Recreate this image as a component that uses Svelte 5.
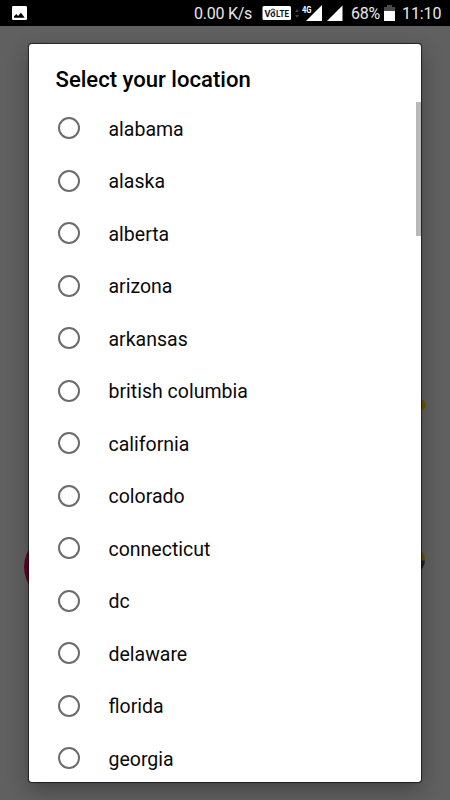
<script lang="ts">
  const locations = [
    'alabama',
    'alaska',
    'alberta',
    'arizona',
    'arkansas',
    'british columbia',
    'california',
    'colorado',
    'connecticut',
    'dc',
    'delaware',
    'florida',
    'georgia'
  ];

  let selected = $state('');
</script>

<div class="screen">
  <header class="status-bar">
    <svg class="picture" width="15" height="14" viewBox="0 0 15 14" aria-hidden="true">
      <rect width="15" height="14" rx="1.3" fill="#fff" />
      <path d="M2 11.7V10.6L4.3 8L6 10L9 6.7L12.7 11.7Z" fill="#000" />
    </svg>
    <span class="speed">0.00 K/s</span>
    <svg class="volte" width="30" height="15" viewBox="0 0 30 15" aria-hidden="true">
      <rect x="0.5" y="0" width="28.5" height="14" rx="1.5" fill="#fff" />
      <text x="2.5" y="11" textLength="11" lengthAdjust="spacingAndGlyphs">Vo</text>
      <text x="14" y="11" textLength="13" lengthAdjust="spacingAndGlyphs">LTE</text>
      <path d="M8.5 4.3Q11 1.7 13.4 4.3M10.5 5.8Q11.8 4.5 13 6.3" fill="none" stroke="#111" stroke-width="0.9" />
    </svg>
    <svg class="arrows" width="4" height="9" viewBox="0 0 4 9" aria-hidden="true">
      <path d="M0 3L2 0L4 3ZM0 6L2 9L4 6Z" fill="#444" />
    </svg>
    <svg class="signal" width="21" height="18" viewBox="0 0 21 18" aria-hidden="true">
      <path d="M4 17L20 1V17Z" fill="#fff" />
      <path d="M0 0H11V8L9 10H0Z" fill="#000" />
      <text class="network" x="0" y="8.5" textLength="9.5" lengthAdjust="spacingAndGlyphs">4G</text>
    </svg>
    <svg class="signal-two" width="16" height="16" viewBox="0 0 16 16" aria-hidden="true">
      <path d="M0 16L15.5 0.5V16Z" fill="#fff" />
    </svg>
    <span class="percent">68%</span>
    <svg class="battery" width="11" height="16" viewBox="0 0 11 16" aria-hidden="true">
      <path d="M0 6V2H3V0H8V2H11V6Z" fill="#4a4a4a" />
      <path d="M0 6H11V16H0Z" fill="#fff" />
    </svg>
    <span class="clock">11:10</span>
  </header>

  <main class="backdrop">
    <span class="blob pink"></span>
    <span class="blob gold"></span>
    <span class="blob brown"></span>

    <div class="dialog" role="dialog" aria-labelledby="title">
      <h1 id="title">Select your location</h1>
      <div class="list" role="radiogroup" aria-labelledby="title">
        {#each locations as location}
          <label class="option">
            <input type="radio" name="location" value={location} bind:group={selected} />
            <span>{location}</span>
          </label>
        {/each}
        <div class="scrollbar"></div>
      </div>
    </div>
  </main>
</div>

<style>
  :global(body) {
    margin: 0;
    overflow: hidden;
  }

  .screen {
    display: flex;
    flex-direction: column;
    width: 450px;
    height: 800px;
    overflow: hidden;
    background: #606060;
    font-family: Roboto, sans-serif;
  }

  .status-bar {
    display: flex;
    flex: none;
    align-items: flex-start;
    box-sizing: border-box;
    height: 26px;
    padding-left: 12px;
    background: #000;
    color: #e8e8e8;
    font-size: 16px;
    line-height: 28px;
    white-space: nowrap;
  }

  .status-bar svg {
    flex: none;
  }

  .picture {
    margin-top: 6px;
  }

  .speed {
    width: 68px;
    margin-left: 167px;
    letter-spacing: -0.25px;
  }

  .volte {
    margin-top: 6px;
  }

  .volte text {
    fill: #111;
    font-size: 8.5px;
    font-weight: 700;
  }

  .arrows {
    margin: 9px 0 0 3px;
  }

  .signal {
    margin: 4px 0 0 3px;
  }

  .network {
    fill: #fff;
    font-size: 9px;
    font-weight: 700;
  }

  .signal-two {
    margin: 5px 0 0 4px;
  }

  .percent {
    width: 33px;
    margin-left: 8px;
    letter-spacing: -0.2px;
  }

  .battery {
    margin-top: 5px;
  }

  .clock {
    margin-left: 7px;
    letter-spacing: -0.1px;
  }

  .backdrop {
    position: relative;
    flex: 1;
    box-sizing: border-box;
    padding: 18px 29px;
    background: #606060;
  }

  .dialog {
    position: relative;
    box-sizing: border-box;
    height: 738px;
    overflow: hidden;
    border-radius: 3px;
    background: #fff;
    box-shadow:
      0 0 1px 0.5px rgba(0, 0, 0, 0.6),
      0 8px 22px rgba(0, 0, 0, 0.3);
  }

  h1 {
    height: 58px;
    margin: 0;
    padding-left: 26.5px;
    color: #000;
    font-size: 22.1px;
    font-weight: 500;
    line-height: 71px;
  }

  .list {
    position: relative;
  }

  .option {
    display: flex;
    align-items: center;
    height: 52.5px;
    padding-left: 28.5px;
    color: #0a0a0a;
    font-size: 19.5px;
  }

  .option input {
    box-sizing: border-box;
    width: 22px;
    height: 22px;
    margin: 0 29px 0 0;
    border: 2px solid #6c6c6c;
    border-radius: 50%;
    appearance: none;
  }

  .option input:checked {
    background: radial-gradient(#6c6c6c 45%, transparent 50%);
  }

  .option span {
    padding-top: 2px;
  }

  .scrollbar {
    position: absolute;
    top: 0;
    right: 0;
    width: 5px;
    height: 134px;
    background: #b8b8b8;
  }

  .blob {
    position: absolute;
  }

  .pink {
    top: 508px;
    left: 24px;
    width: 66px;
    height: 66px;
    border-radius: 50%;
    background: #650028;
  }

  .gold {
    top: 373px;
    left: 410px;
    width: 16px;
    height: 12px;
    border-radius: 50%;
    background: #6d5300;
  }

  .brown {
    top: 523px;
    left: 410px;
    width: 15px;
    height: 22px;
    border-radius: 50%;
    background: linear-gradient(#62510b 50%, #222 55%);
  }
</style>
